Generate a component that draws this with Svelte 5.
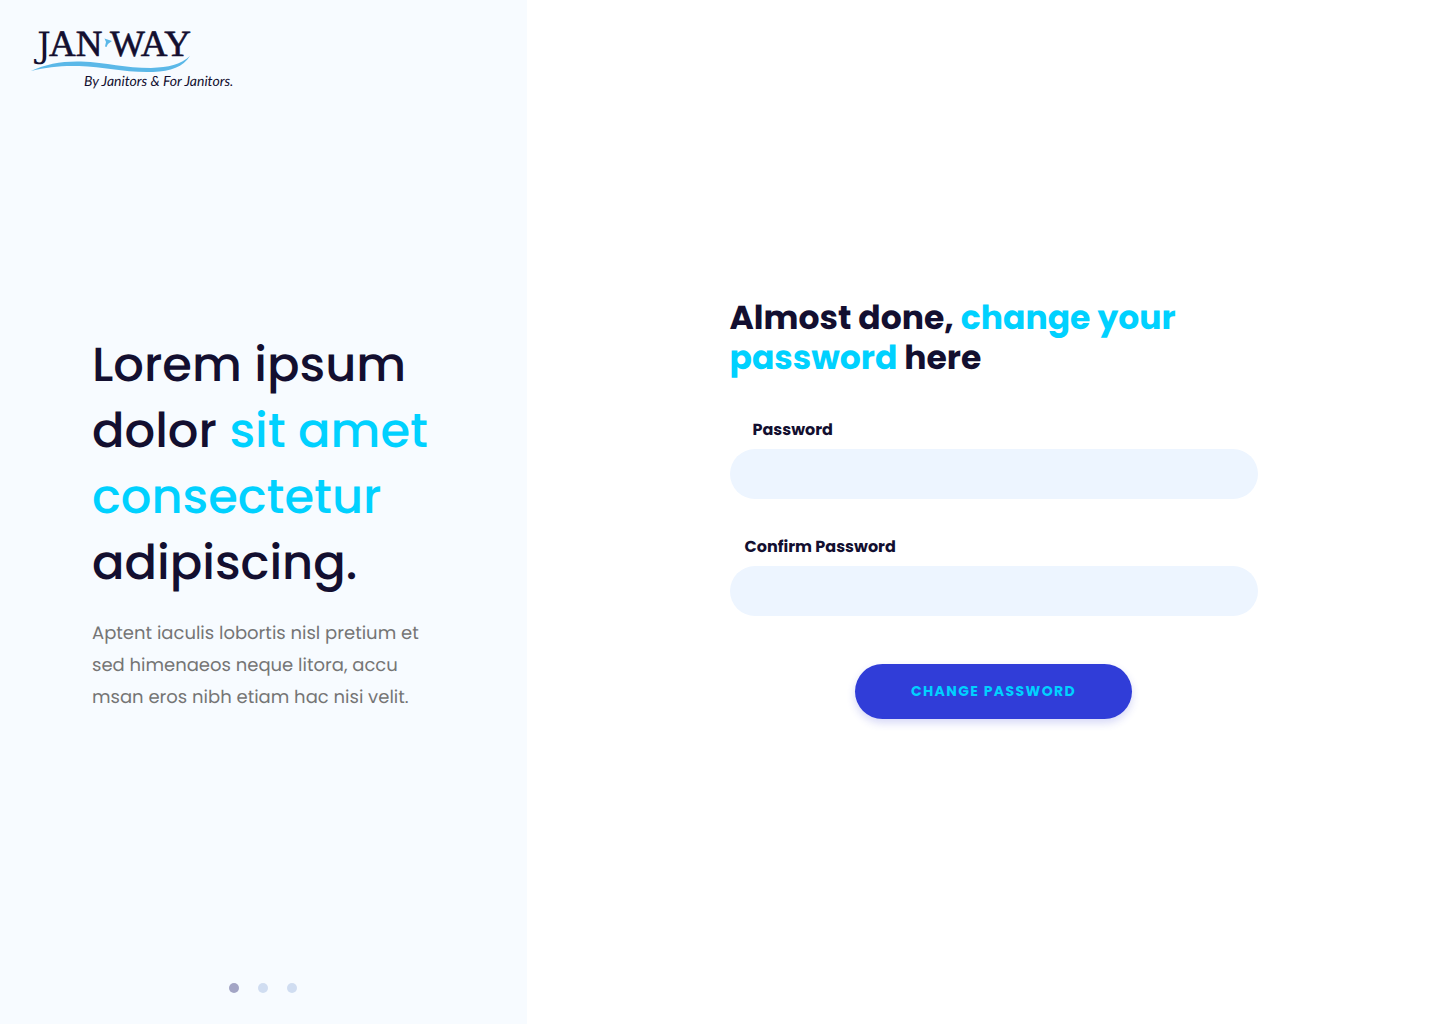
<script>
  const slides = [1, 2, 3];
  let current = $state(1);
  let password = $state('');
  let confirmation = $state('');
</script>

<div class="page">
  <aside class="intro">
    <header>
      <svg class="logo" viewBox="0 -10 206 80" role="img" aria-label="Jan-Way, by janitors and for janitors">
        <g class="wordmark">
          <text class="initial" x="5" y="31">J</text>
          <text x="17" y="30">AN</text>
          <text x="78" y="30">WAY</text>
        </g>
        <path class="blue" d="M72.500 12.500 L80 15 Q76 17 74.500 21 L73 20.500 L74 16 Z" />
        <path class="blue" d="M-1 45 C14 38 30 35 49 35.500 C75 36.500 93 42 119 42 C137 41 148 39 158 30 C151 41 139 45 121 46 C93 47 73 40.500 47 40 C29 39.500 15 41 -1 45 Z" />
        <text class="tagline" x="52" y="60">By Janitors &amp; For Janitors.</text>
      </svg>
    </header>

    <section class="copy">
      <h2>
        Lorem ipsum<br />dolor <span>sit amet<br />consectetur</span><br />adipiscing.
      </h2>
      <p>
        Aptent iaculis lobortis nisl pretium et<br />sed himenaeos neque litora, accu<br />msan eros nibh etiam hac nisi velit.
      </p>
    </section>

    <nav class="dots" aria-label="Slides">
      {#each slides as slide}
        <button
          type="button"
          class:active={current === slide}
          aria-label={`Slide ${slide}`}
          onclick={() => (current = slide)}
        ></button>
      {/each}
    </nav>
  </aside>

  <main>
    <form onsubmit={(event) => event.preventDefault()}>
      <h1>Almost done, <span>change your<br />password</span> here</h1>
      <div class="field">
        <label class="inset" for="password">Password</label>
        <input id="password" type="password" autocomplete="new-password" bind:value={password} />
      </div>
      <div class="field">
        <label for="confirmation">Confirm Password</label>
        <input id="confirmation" type="password" autocomplete="new-password" bind:value={confirmation} />
      </div>
      <button class="submit" type="submit">CHANGE PASSWORD</button>
    </form>
  </main>
</div>

<style>
  :global(body) {
    margin: 0;
    background: #fff;
  }

  .page {
    display: grid;
    grid-template-columns: minmax(460px, 36.6%) 1fr;
    min-height: 100vh;
    color: #130f30;
    font-family: Poppins, Inter, sans-serif;
    text-rendering: geometricPrecision;
  }

  .intro {
    display: flex;
    flex-direction: column;
    box-sizing: border-box;
    padding: 16px 33px 31px 32px;
    background: #f7fbff;
  }

  header {
    display: flex;
  }

  .logo {
    width: 206px;
    height: 80px;
    overflow: visible;
  }

  .wordmark {
    fill: #130f30;
    stroke: #130f30;
    stroke-width: 0.6px;
    font-family: "Liberation Serif", serif;
    font-size: 37px;
  }

  .initial {
    stroke: none;
    font-family: "DejaVu Serif", serif;
    font-size: 35px;
  }

  .blue {
    fill: #5bb8e8;
  }

  .tagline {
    fill: #130f30;
    font: italic 400 14px Lato, sans-serif;
  }

  .copy {
    display: flex;
    flex: 1;
    flex-direction: column;
    justify-content: center;
    gap: 22px;
    padding: 0 0 34px 60px;
  }

  h1,
  h2,
  p {
    margin: 0;
    white-space: nowrap;
  }

  h2 {
    font-size: 48px;
    font-weight: 500;
    line-height: 66px;
  }

  h1 span,
  h2 span {
    color: #00d1ff;
  }

  p {
    color: #757575;
    font-size: 18px;
    line-height: 32px;
  }

  .dots {
    display: flex;
    justify-content: center;
    gap: 19px;
  }

  .dots button {
    width: 10px;
    height: 10px;
    padding: 0;
    border: 0;
    border-radius: 50%;
    background: #d0ddf1;
    cursor: pointer;
  }

  .dots .active {
    background: #a3a5c5;
  }

  main {
    display: flex;
    align-items: center;
    justify-content: center;
    padding: 0 12px 7px 32px;
  }

  form {
    display: flex;
    flex: 0 1 528px;
    flex-direction: column;
  }

  h1 {
    margin-bottom: 40px;
    font-size: 33px;
    font-weight: 700;
    line-height: 40px;
  }

  .field {
    display: flex;
    flex-direction: column;
    gap: 7px;
    margin-bottom: 36px;
  }

  label {
    padding-left: 15px;
    font-size: 16px;
    font-weight: 700;
    line-height: 24px;
  }

  .inset {
    padding-left: 23px;
  }

  input {
    box-sizing: border-box;
    width: 100%;
    height: 50px;
    padding: 0 24px;
    border: 0;
    border-radius: 25px;
    background: #edf5ff;
    color: inherit;
    font: inherit;
  }

  .submit {
    align-self: center;
    width: 277px;
    height: 55px;
    margin-top: 12px;
    border: 0;
    border-radius: 28px;
    background: #303dd8;
    box-shadow: 0 4px 8px rgba(48, 61, 216, 0.2);
    color: #00d1ff;
    font: 700 14px Poppins, Inter, sans-serif;
    letter-spacing: 0.1em;
    cursor: pointer;
  }
</style>
